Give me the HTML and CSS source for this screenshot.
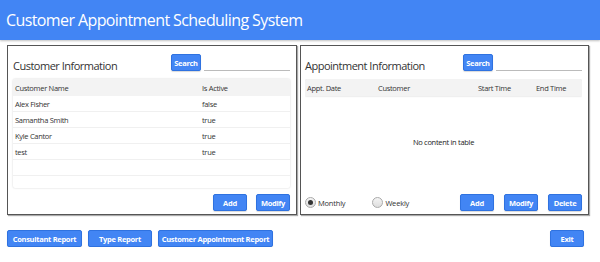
FILE: index.html
```html
<!DOCTYPE html>
<html lang="en">
<head>
  <meta charset="UTF-8">
  <meta name="viewport" content="width=device-width, initial-scale=1.0">
  <title>Customer Appointment Scheduling System</title>
  <link rel="stylesheet" href="styles.css">
</head>
<body>
  <div class="header">Customer Appointment Scheduling System</div>

  <div class="panels">
    <div class="panel">
      <div class="panel-top">
        <div class="panel-title">Customer Information</div>
        <div class="search">
          <button class="btn btn-search">Search</button>
          <input type="text" class="search-input">
        </div>
      </div>
      <div class="table">
        <div class="row head">
          <div class="cell c-name">Customer Name</div>
          <div class="cell">Is Active</div>
        </div>
        <div class="row">
          <div class="cell c-name">Alex Fisher</div>
          <div class="cell">false</div>
        </div>
        <div class="row">
          <div class="cell c-name">Samantha Smith</div>
          <div class="cell">true</div>
        </div>
        <div class="row">
          <div class="cell c-name">Kyle Cantor</div>
          <div class="cell">true</div>
        </div>
        <div class="row">
          <div class="cell c-name">test</div>
          <div class="cell">true</div>
        </div>
        <div class="row"></div>
        <div class="row"></div>
      </div>
      <div class="panel-bottom">
        <div class="actions">
          <button class="btn btn-sm">Add</button>
          <button class="btn btn-sm">Modify</button>
        </div>
      </div>
    </div>

    <div class="panel panel-right">
      <div class="panel-top">
        <div class="panel-title">Appointment Information</div>
        <div class="search">
          <button class="btn btn-search">Search</button>
          <input type="text" class="search-input">
        </div>
      </div>
      <div class="table table-empty">
        <div class="row head">
          <div class="cell c-date">Appt. Date</div>
          <div class="cell c-cust">Customer</div>
          <div class="cell c-start">Start Time</div>
          <div class="cell">End Time</div>
        </div>
        <div class="placeholder">No content in table</div>
      </div>
      <div class="panel-bottom">
        <div class="radios">
          <label class="radio checked"><span class="dot"></span>Monthly</label>
          <label class="radio"><span class="dot"></span>Weekly</label>
        </div>
        <div class="actions actions-wide">
          <button class="btn btn-sm">Add</button>
          <button class="btn btn-sm">Modify</button>
          <button class="btn btn-sm">Delete</button>
        </div>
      </div>
    </div>
  </div>

  <div class="footer">
    <div class="reports">
      <button class="btn btn-consultant">Consultant Report</button>
      <button class="btn btn-type">Type Report</button>
      <button class="btn btn-customer">Customer Appointment Report</button>
    </div>
    <button class="btn btn-sm">Exit</button>
  </div>
</body>
</html>
```

FILE: styles.css
```css
body {
  margin: 0;
  font-family: 'Open Sans', sans-serif;
  background: #fff;
  color: #222;
}
.header {
  height: 40px;
  line-height: 40px;
  padding-left: 6px;
  background: #4285f4;
  color: #fff;
  font-size: 16px;
  letter-spacing: -0.6px;
  box-shadow: 0 1px 2px rgba(0, 0, 0, 0.25);
}
.panels {
  display: flex;
  gap: 3px;
  margin: 5px 0 0 7px;
}
.panel {
  width: 277px;
  height: 168px;
  padding: 0 6px 0 5px;
  border: 1px solid #555;
  box-shadow: 1px 1px 1px #aaa;
}
.panel-right {
  padding-left: 4px;
}
.panel-top {
  display: flex;
  align-items: flex-end;
  height: 17px;
  margin-top: 8px;
}
.panel-title {
  flex: 1;
  font-size: 11px;
  letter-spacing: -0.5px;
  line-height: 11px;
  color: #333;
}
.search {
  display: flex;
  align-items: flex-end;
  gap: 3px;
}
.search-input {
  width: 86px;
  height: 14px;
  padding: 0;
  border: none;
  border-bottom: 1px solid #bbb;
  outline: none;
}
.btn {
  height: 17px;
  padding: 0;
  border: 1px solid #2f72e0;
  border-radius: 2px;
  background: #4285f4;
  color: #fff;
  font-family: 'Open Sans', sans-serif;
  font-size: 7.5px;
  font-weight: bold;
  letter-spacing: -0.3px;
  white-space: nowrap;
  box-shadow: 0 1px 1px rgba(0, 0, 0, 0.15);
  cursor: pointer;
}
.btn-search {
  width: 30px;
}
.btn-sm {
  width: 34px;
}
.btn-consultant {
  width: 75px;
}
.btn-type {
  width: 64px;
}
.btn-customer {
  width: 115px;
}
.table {
  height: 109px;
  margin-top: 8px;
  overflow: hidden;
  box-shadow: 0 0 2px rgba(0, 0, 0, 0.2);
  border-radius: 2px;
  font-size: 7.5px;
  letter-spacing: -0.3px;
}
.table-empty {
  box-shadow: none;
  display: flex;
  flex-direction: column;
}
.table-empty .head {
  box-shadow: 0 0 2px rgba(0, 0, 0, 0.2);
}
.row {
  display: flex;
  align-items: center;
  height: 16px;
  border-bottom: 1px solid #f0f0f0;
  box-sizing: border-box;
}
.row.head {
  height: 17px;
  background: #f3f3f3;
  border-bottom: none;
}
.cell {
  padding-left: 2px;
  color: #333;
}
.c-name {
  width: 185px;
}
.c-date {
  width: 69px;
}
.c-cust {
  width: 98px;
}
.c-start {
  width: 56px;
}
.placeholder {
  flex: 1;
  display: flex;
  align-items: center;
  justify-content: center;
  color: #222;
}
.panel-bottom {
  display: flex;
  align-items: center;
  justify-content: space-between;
  margin-top: 6px;
}
.actions {
  display: flex;
  gap: 9px;
  margin-left: auto;
}
.actions-wide {
  gap: 10px;
}
.radios {
  display: flex;
  gap: 27px;
  font-size: 7.5px;
  letter-spacing: -0.2px;
  color: #333;
}
.radio {
  display: flex;
  align-items: center;
  gap: 2px;
}
.dot {
  width: 9px;
  height: 9px;
  border: 1px solid #aaa;
  border-radius: 50%;
  background: linear-gradient(#f4f4f4, #ddd);
  position: relative;
}
.radio.checked .dot::after {
  content: "";
  position: absolute;
  top: 2px;
  left: 2px;
  width: 5px;
  height: 5px;
  border-radius: 50%;
  background: #333;
}
.footer {
  display: flex;
  justify-content: space-between;
  align-items: center;
  margin: 15px 16px 0 7px;
}
.reports {
  display: flex;
  gap: 6px;
}
```
